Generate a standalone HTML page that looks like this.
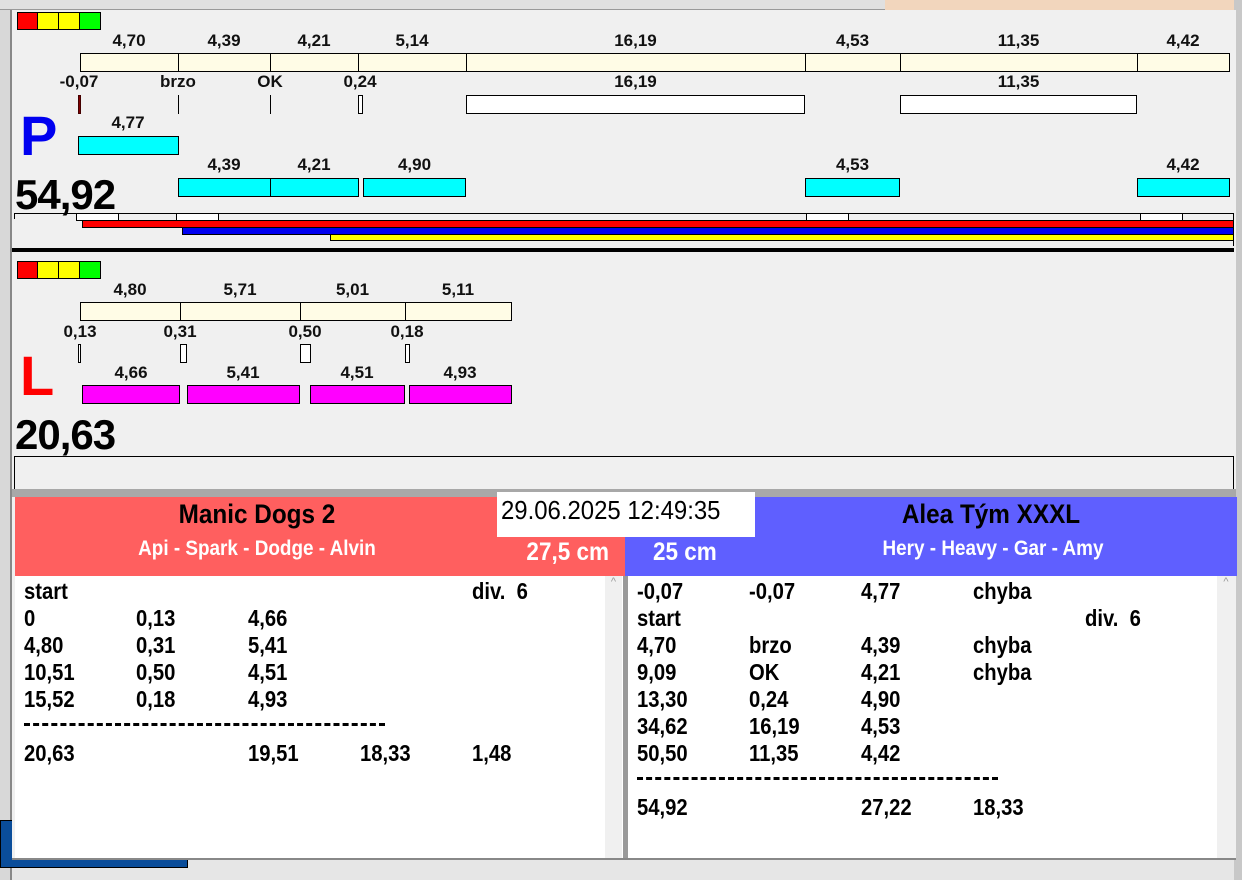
<!DOCTYPE html>
<html><head><meta charset="utf-8"><style>
*{margin:0;padding:0;box-sizing:border-box}
body{width:1242px;height:880px;position:relative;overflow:hidden;background:#e6e6e6;font-family:"Liberation Sans",Arial,sans-serif;}
div{position:absolute}
.b{border:1px solid #000}
.cr{background:#fffce6;border:1px solid #000}
.cy{background:#00ffff;border:1px solid #000}
.mg{background:#ff00ff;border:1px solid #000}
.w{background:#fff;border:1px solid #000}
.l{font-weight:bold;font-size:17px;text-align:center;line-height:18px;color:#111}
.t{font-weight:bold;font-size:23px;line-height:27px;color:#000;white-space:nowrap;transform:scaleX(.88);transform-origin:left}
.h{white-space:nowrap;transform:scaleX(.9);transform-origin:center}
</style></head><body>
<div style="left:0;top:0;width:12px;height:880px;background:#d8d8d8;border-right:2px solid #888"></div>
<div style="left:0;top:0;width:1242px;height:10px;background:#e0e0e0;border-bottom:1px solid #999"></div>
<div style="left:885px;top:0;width:357px;height:10px;background:#f2d6bd"></div>
<div style="left:1234px;top:0;width:8px;height:880px;background:#c8c8c8"></div>
<div style="left:0;top:820px;width:188px;height:48px;background:#0a4d9a;border:1px solid #000"></div>
<div style="left:12px;top:10px;width:1224px;height:850px;background:#f0f0f0"></div>

<div style="left:17px;top:12px;width:21px;height:18px;background:#f00" class="b"></div>
<div style="left:37px;top:12px;width:22px;height:18px;background:#ff0" class="b"></div>
<div style="left:58px;top:12px;width:22px;height:18px;background:#ff0" class="b"></div>
<div style="left:79px;top:12px;width:22px;height:18px;background:#0f0" class="b"></div>

<div class="l" style="left:80px;top:32px;width:98px">4,70</div>
<div class="l" style="left:178px;top:32px;width:92px">4,39</div>
<div class="l" style="left:270px;top:32px;width:88px">4,21</div>
<div class="l" style="left:358px;top:32px;width:108px">5,14</div>
<div class="l" style="left:466px;top:32px;width:339px">16,19</div>
<div class="l" style="left:805px;top:32px;width:95px">4,53</div>
<div class="l" style="left:900px;top:32px;width:237px">11,35</div>
<div class="l" style="left:1137px;top:32px;width:92px">4,42</div>
<div class="cr" style="left:80px;top:53px;width:99px;height:19px"></div>
<div class="cr" style="left:178px;top:53px;width:93px;height:19px"></div>
<div class="cr" style="left:270px;top:53px;width:89px;height:19px"></div>
<div class="cr" style="left:358px;top:53px;width:109px;height:19px"></div>
<div class="cr" style="left:466px;top:53px;width:340px;height:19px"></div>
<div class="cr" style="left:805px;top:53px;width:96px;height:19px"></div>
<div class="cr" style="left:900px;top:53px;width:238px;height:19px"></div>
<div class="cr" style="left:1137px;top:53px;width:93px;height:19px"></div>

<div class="l" style="left:49px;top:73px;width:60px">-0,07</div>
<div class="l" style="left:148px;top:73px;width:60px">brzo</div>
<div class="l" style="left:240px;top:73px;width:60px">OK</div>
<div class="l" style="left:330px;top:73px;width:60px">0,24</div>
<div class="l" style="left:466px;top:73px;width:339px">16,19</div>
<div class="l" style="left:900px;top:73px;width:237px">11,35</div>
<div style="left:78px;top:95px;width:3px;height:19px;background:#800000;border:1px solid #400"></div>
<div style="left:178px;top:95px;width:1px;height:19px;background:#000"></div>
<div style="left:270px;top:95px;width:1px;height:19px;background:#000"></div>
<div class="w" style="left:358px;top:95px;width:5px;height:19px"></div>
<div class="w" style="left:466px;top:95px;width:339px;height:19px"></div>
<div class="w" style="left:900px;top:95px;width:237px;height:19px"></div>

<div style="left:20px;top:106px;font-size:56px;font-weight:bold;color:#0000f0;line-height:60px">P</div>
<div class="l" style="left:78px;top:114px;width:100px">4,77</div>
<div class="cy" style="left:78px;top:136px;width:101px;height:19px"></div>
<div class="l" style="left:178px;top:156px;width:92px">4,39</div>
<div class="l" style="left:270px;top:156px;width:88px">4,21</div>
<div class="l" style="left:363px;top:156px;width:103px">4,90</div>
<div class="l" style="left:805px;top:156px;width:95px">4,53</div>
<div class="l" style="left:1137px;top:156px;width:92px">4,42</div>
<div class="cy" style="left:178px;top:178px;width:93px;height:19px"></div>
<div class="cy" style="left:270px;top:178px;width:89px;height:19px"></div>
<div class="cy" style="left:363px;top:178px;width:103px;height:19px"></div>
<div class="cy" style="left:805px;top:178px;width:95px;height:19px"></div>
<div class="cy" style="left:1137px;top:178px;width:93px;height:19px"></div>
<div style="left:15px;top:172px;font-size:42px;font-weight:bold;line-height:46px;letter-spacing:-1px">54,92</div>

<div style="left:14px;top:213px;width:1220px;height:1px;background:#000"></div>
<div style="left:14px;top:213px;width:1px;height:6px;background:#000"></div>
<div style="left:1233px;top:213px;width:1px;height:33px;background:#000"></div>
<div class="w" style="left:76px;top:213px;width:43px;height:8px"></div>
<div class="w" style="left:176px;top:213px;width:43px;height:8px"></div>
<div class="w" style="left:806px;top:213px;width:43px;height:8px"></div>
<div class="w" style="left:1140px;top:213px;width:43px;height:8px"></div>
<div style="left:82px;top:220px;width:1152px;height:8px;background:#f00;border:1px solid #000"></div>
<div style="left:182px;top:227px;width:1052px;height:8px;background:#0000f0;border:1px solid #000"></div>
<div style="left:330px;top:234px;width:904px;height:7px;background:#ff0;border:1px solid #000"></div>
<div style="left:12px;top:248px;width:1222px;height:4px;background:#000"></div>

<div style="left:17px;top:261px;width:21px;height:18px;background:#f00" class="b"></div>
<div style="left:37px;top:261px;width:22px;height:18px;background:#ff0" class="b"></div>
<div style="left:58px;top:261px;width:22px;height:18px;background:#ff0" class="b"></div>
<div style="left:79px;top:261px;width:22px;height:18px;background:#0f0" class="b"></div>
<div class="l" style="left:80px;top:281px;width:100px">4,80</div>
<div class="l" style="left:180px;top:281px;width:120px">5,71</div>
<div class="l" style="left:300px;top:281px;width:105px">5,01</div>
<div class="l" style="left:405px;top:281px;width:106px">5,11</div>
<div class="cr" style="left:80px;top:302px;width:101px;height:19px"></div>
<div class="cr" style="left:180px;top:302px;width:121px;height:19px"></div>
<div class="cr" style="left:300px;top:302px;width:106px;height:19px"></div>
<div class="cr" style="left:405px;top:302px;width:107px;height:19px"></div>
<div class="l" style="left:50px;top:323px;width:60px">0,13</div>
<div class="l" style="left:150px;top:323px;width:60px">0,31</div>
<div class="l" style="left:275px;top:323px;width:60px">0,50</div>
<div class="l" style="left:377px;top:323px;width:60px">0,18</div>
<div class="w" style="left:78px;top:344px;width:3px;height:19px"></div>
<div class="w" style="left:180px;top:344px;width:7px;height:19px"></div>
<div class="w" style="left:300px;top:344px;width:11px;height:19px"></div>
<div class="w" style="left:405px;top:344px;width:5px;height:19px"></div>
<div style="left:20px;top:346px;font-size:56px;font-weight:bold;color:#f00;line-height:60px">L</div>
<div class="l" style="left:83px;top:364px;width:96px">4,66</div>
<div class="l" style="left:187px;top:364px;width:112px">5,41</div>
<div class="l" style="left:310px;top:364px;width:94px">4,51</div>
<div class="l" style="left:409px;top:364px;width:102px">4,93</div>
<div class="mg" style="left:82px;top:385px;width:98px;height:19px"></div>
<div class="mg" style="left:187px;top:385px;width:113px;height:19px"></div>
<div class="mg" style="left:310px;top:385px;width:95px;height:19px"></div>
<div class="mg" style="left:409px;top:385px;width:103px;height:19px"></div>
<div style="left:15px;top:412px;font-size:42px;font-weight:bold;line-height:46px;letter-spacing:-1px">20,63</div>
<div style="left:14px;top:456px;width:1220px;height:1px;background:#000"></div>
<div style="left:14px;top:456px;width:1px;height:34px;background:#000"></div>
<div style="left:1233px;top:456px;width:1px;height:34px;background:#000"></div>
<div style="left:12px;top:489px;width:1224px;height:8px;background:#a8a8a8"></div>

<div style="left:15px;top:497px;width:610px;height:79px;background:#ff5f5f"></div>
<div style="left:625px;top:497px;width:612px;height:79px;background:#5f5fff"></div>
<div class="h" style="left:15px;top:498px;width:484px;text-align:center;font-size:27px;font-weight:bold;line-height:32px">Manic Dogs 2</div>
<div class="h" style="left:15px;top:537px;width:484px;text-align:center;font-size:21px;font-weight:bold;color:#fff;line-height:24px">Api - Spark - Dodge - Alvin</div>
<div style="left:497px;top:492px;width:258px;height:45px;background:#fff"></div>
<div style="left:501px;top:494px;font-size:26px;line-height:32px;white-space:nowrap;transform:scaleX(.92);transform-origin:left">29.06.2025 12:49:35</div>
<div style="left:500px;top:537px;width:109px;text-align:right;font-size:25px;font-weight:bold;color:#fff;line-height:30px;white-space:nowrap;transform:scaleX(.9);transform-origin:right">27,5 cm</div>
<div style="left:653px;top:537px;font-size:25px;font-weight:bold;color:#fff;line-height:30px;white-space:nowrap;transform:scaleX(.9);transform-origin:left">25 cm</div>
<div class="h" style="left:755px;top:498px;width:472px;text-align:center;font-size:27px;font-weight:bold;line-height:32px">Alea Tým XXXL</div>
<div class="h" style="left:755px;top:537px;width:476px;text-align:center;font-size:21px;font-weight:bold;color:#fff;line-height:24px">Hery - Heavy - Gar - Amy</div>

<div style="left:15px;top:576px;width:590px;height:282px;background:#fff"></div>
<div style="left:605px;top:576px;width:17px;height:282px;background:#f0f0f0;color:#999;font-size:11px;text-align:center">^</div>
<div style="left:622px;top:576px;width:6px;height:282px;background:#9a9a9a;border-left:1px solid #fff"></div>
<div style="left:628px;top:576px;width:589px;height:282px;background:#fff"></div>
<div style="left:1217px;top:576px;width:18px;height:282px;background:#f0f0f0;color:#999;font-size:11px;text-align:center">^</div>
<div style="left:12px;top:858px;width:1224px;height:2px;background:#888"></div>

<div class="t" style="left:24px;top:578px">start</div><div class="t" style="left:472px;top:578px">div.&nbsp; 6</div>
<div class="t" style="left:24px;top:605px">0</div><div class="t" style="left:136px;top:605px">0,13</div><div class="t" style="left:248px;top:605px">4,66</div>
<div class="t" style="left:24px;top:632px">4,80</div><div class="t" style="left:136px;top:632px">0,31</div><div class="t" style="left:248px;top:632px">5,41</div>
<div class="t" style="left:24px;top:659px">10,51</div><div class="t" style="left:136px;top:659px">0,50</div><div class="t" style="left:248px;top:659px">4,51</div>
<div class="t" style="left:24px;top:686px">15,52</div><div class="t" style="left:136px;top:686px">0,18</div><div class="t" style="left:248px;top:686px">4,93</div>
<div style="left:24px;top:723px;width:361px;height:0;border-top:3px dashed #000"></div>
<div class="t" style="left:24px;top:740px">20,63</div><div class="t" style="left:248px;top:740px">19,51</div><div class="t" style="left:360px;top:740px">18,33</div><div class="t" style="left:472px;top:740px">1,48</div>

<div class="t" style="left:637px;top:578px">-0,07</div><div class="t" style="left:749px;top:578px">-0,07</div><div class="t" style="left:861px;top:578px">4,77</div><div class="t" style="left:973px;top:578px">chyba</div>
<div class="t" style="left:637px;top:605px">start</div><div class="t" style="left:1085px;top:605px">div.&nbsp; 6</div>
<div class="t" style="left:637px;top:632px">4,70</div><div class="t" style="left:749px;top:632px">brzo</div><div class="t" style="left:861px;top:632px">4,39</div><div class="t" style="left:973px;top:632px">chyba</div>
<div class="t" style="left:637px;top:659px">9,09</div><div class="t" style="left:749px;top:659px">OK</div><div class="t" style="left:861px;top:659px">4,21</div><div class="t" style="left:973px;top:659px">chyba</div>
<div class="t" style="left:637px;top:686px">13,30</div><div class="t" style="left:749px;top:686px">0,24</div><div class="t" style="left:861px;top:686px">4,90</div>
<div class="t" style="left:637px;top:713px">34,62</div><div class="t" style="left:749px;top:713px">16,19</div><div class="t" style="left:861px;top:713px">4,53</div>
<div class="t" style="left:637px;top:740px">50,50</div><div class="t" style="left:749px;top:740px">11,35</div><div class="t" style="left:861px;top:740px">4,42</div>
<div style="left:637px;top:777px;width:361px;height:0;border-top:3px dashed #000"></div>
<div class="t" style="left:637px;top:794px">54,92</div><div class="t" style="left:861px;top:794px">27,22</div><div class="t" style="left:973px;top:794px">18,33</div>
</body></html>
